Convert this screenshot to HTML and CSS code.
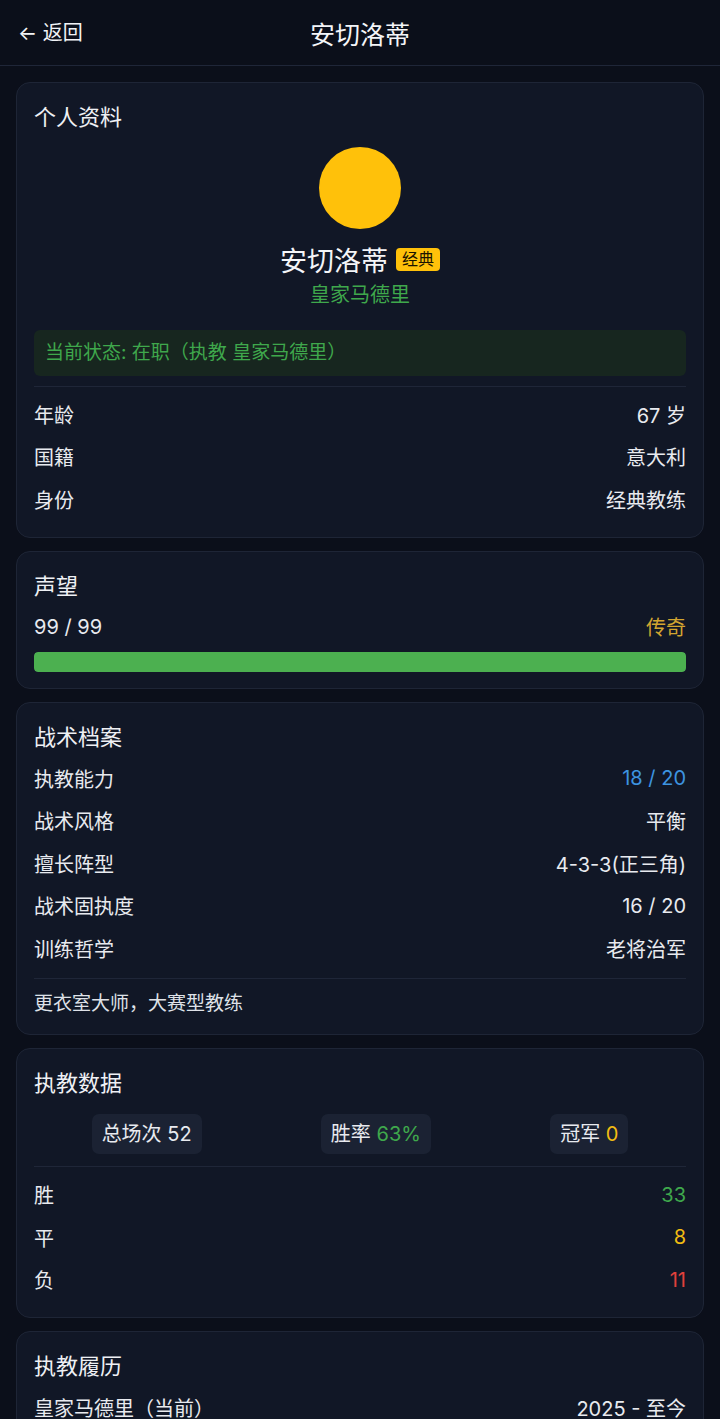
FILE: index.html
```html
<!DOCTYPE html>
<html lang="zh-CN">
<head>
    <meta charset="UTF-8">
    <meta name="viewport" content="width=device-width, initial-scale=1.0">
    <title>安切洛蒂</title>
    <link rel="stylesheet" href="styles.css">
</head>
<body>
    <header class="topbar">
        <span class="back">← 返回</span>
        <h1 class="title">安切洛蒂</h1>
    </header>

    <main class="page">
        <!-- 个人资料 -->
        <section class="card">
            <h2 class="card-title">个人资料</h2>
            <div class="profile">
                <div class="avatar"></div>
                <div class="name-line">
                    <span class="name">安切洛蒂</span>
                    <span class="badge">经典</span>
                </div>
                <div class="club">皇家马德里</div>
            </div>
            <div class="status">当前状态: 在职（执教 皇家马德里）</div>
            <div class="rows divided">
                <div class="row"><span>年龄</span><span>67 岁</span></div>
                <div class="row"><span>国籍</span><span>意大利</span></div>
                <div class="row"><span>身份</span><span>经典教练</span></div>
            </div>
        </section>

        <!-- 声望 -->
        <section class="card">
            <h2 class="card-title">声望</h2>
            <div class="row"><span>99 / 99</span><span class="gold">传奇</span></div>
            <div class="bar"><div class="bar-fill" style="width: 100%"></div></div>
        </section>

        <!-- 战术档案 -->
        <section class="card">
            <h2 class="card-title">战术档案</h2>
            <div class="rows">
                <div class="row"><span>执教能力</span><span class="blue">18 / 20</span></div>
                <div class="row"><span>战术风格</span><span>平衡</span></div>
                <div class="row"><span>擅长阵型</span><span>4-3-3(正三角)</span></div>
                <div class="row"><span>战术固执度</span><span>16 / 20</span></div>
                <div class="row"><span>训练哲学</span><span>老将治军</span></div>
            </div>
            <p class="note">更衣室大师，大赛型教练</p>
        </section>

        <!-- 执教数据 -->
        <section class="card">
            <h2 class="card-title">执教数据</h2>
            <div class="chips">
                <div class="chip-cell"><span class="chip">总场次 52</span></div>
                <div class="chip-cell"><span class="chip">胜率 <span class="green">63%</span></span></div>
                <div class="chip-cell"><span class="chip">冠军 <span class="yellow">0</span></span></div>
            </div>
            <div class="rows divided">
                <div class="row"><span>胜</span><span class="green">33</span></div>
                <div class="row"><span>平</span><span class="yellow">8</span></div>
                <div class="row"><span>负</span><span class="red">11</span></div>
            </div>
        </section>

        <!-- 执教履历 -->
        <section class="card">
            <h2 class="card-title">执教履历</h2>
            <div class="rows">
                <div class="row"><span>皇家马德里（当前）</span><span>2025 - 至今</span></div>
                <div class="row"><span>那不勒斯</span><span>2019 - 2020</span></div>
            </div>
        </section>
    </main>
</body>
</html>
```

FILE: styles.css
```css
* {
    box-sizing: border-box;
}

body {
    margin: 0;
    background: #0b0f1a;
    color: #e8eaef;
    font-family: "Inter", "Noto Sans CJK SC", sans-serif;
    font-size: 20px;
}

.topbar {
    height: 66px;
    display: flex;
    align-items: center;
    justify-content: center;
    position: relative;
    border-bottom: 1px solid #1f2638;
    background: #0b0f1a;
}

.back {
    position: absolute;
    left: 18px;
    top: 18px;
    font-size: 20px;
    line-height: 30px;
    color: #f1f3f6;
}

.title {
    margin: 0;
    font-size: 25px;
    font-weight: 400;
    color: #f4f5f8;
}

.page {
    padding: 16px 16px 0;
    display: flex;
    flex-direction: column;
    gap: 13px;
}

.card {
    background: #111726;
    border: 1px solid #1e2536;
    border-radius: 14px;
    padding: 16px 17px 16px;
}

.card-title {
    margin: 0 0 2px;
    font-size: 22px;
    font-weight: 400;
    line-height: 36px;
    color: #eef0f4;
}

.profile {
    display: flex;
    flex-direction: column;
    align-items: center;
    padding-top: 10px;
}

.avatar {
    width: 82px;
    height: 82px;
    border-radius: 50%;
    background: #ffc10a;
}

.name-line {
    display: flex;
    align-items: center;
    gap: 8px;
    margin-top: 12px;
    height: 36px;
}

.name {
    font-size: 27px;
    color: #f4f5f8;
}

.badge {
    background: #ffc10a;
    color: #1a1400;
    font-size: 16px;
    line-height: 23px;
    padding: 0 6px;
    border-radius: 4px;
}

.club {
    margin-top: 4px;
    font-size: 20px;
    line-height: 28px;
    color: #3fa84c;
}

.status {
    margin-top: 21px;
    background: #17261f;
    border-radius: 6px;
    padding: 0 11px;
    height: 46px;
    line-height: 46px;
    font-size: 19px;
    color: #3fa84c;
}

.rows.divided {
    margin-top: 10px;
    border-top: 1px solid #1f2638;
    padding-top: 6px;
}

.row {
    display: flex;
    justify-content: space-between;
    align-items: center;
    height: 42.5px;
    font-size: 20px;
    color: #e8eaef;
}

.bar {
    margin-top: 4px;
    height: 20px;
    border-radius: 4px;
    background: #1f2638;
    overflow: hidden;
}

.bar-fill {
    height: 100%;
    background: #4cb050;
    border-radius: 4px;
}

.note {
    margin: 8px 0 0;
    border-top: 1px solid #1f2638;
    padding-top: 11px;
    font-size: 19px;
    line-height: 28px;
    color: #dfe2e8;
}

.chips {
    display: flex;
    gap: 4px;
    margin-top: 13px;
}

.chip-cell {
    flex: 1 1 auto;
    display: flex;
    justify-content: center;
}

.chip {
    background: #1b2233;
    border-radius: 7px;
    padding: 0 10px;
    height: 40px;
    line-height: 40px;
    font-size: 20px;
    color: #e8eaef;
}

.chips + .rows.divided {
    margin-top: 12px;
    padding-top: 7px;
}

.gold {
    color: #d3a530;
}

.blue {
    color: #3d94e0;
}

.green {
    color: #3fa84c;
}

.yellow {
    color: #f2bd12;
}

.red {
    color: #e0413c;
}
```
